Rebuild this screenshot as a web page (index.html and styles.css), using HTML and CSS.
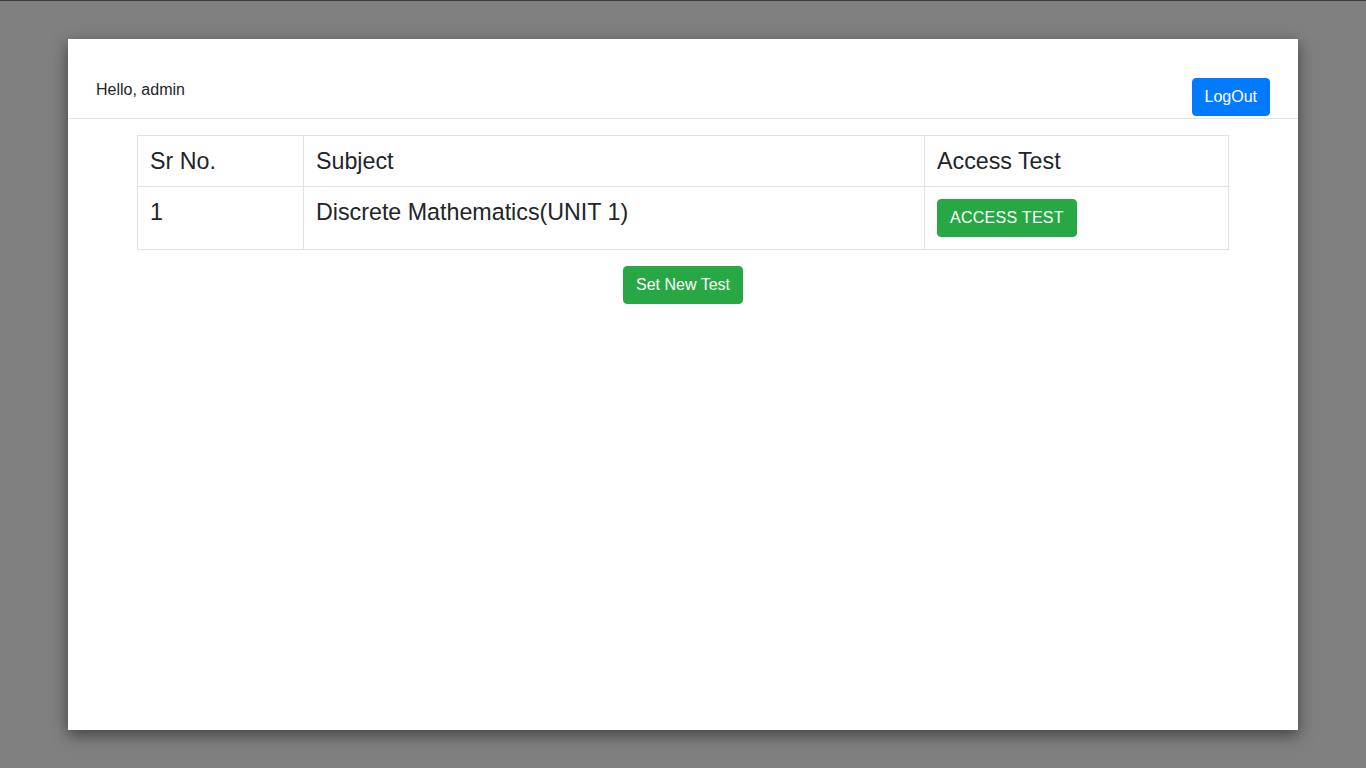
FILE: index.html
```html
<!DOCTYPE html>
<html lang="en">
<head>
<meta charset="utf-8">
<title>Tests</title>
<link rel="stylesheet" href="styles.css">
</head>
<body>
<div class="page">
  <div class="panel">
    <header class="topbar">
      <span class="hello">Hello, admin</span>
      <button class="btn btn-blue">LogOut</button>
    </header>
    <main class="content">
      <table class="tests">
        <thead>
          <tr>
            <th class="c-sr">Sr No.</th>
            <th class="c-subj">Subject</th>
            <th class="c-acc">Access Test</th>
          </tr>
        </thead>
        <tbody>
          <tr>
            <td>1</td>
            <td>Discrete Mathematics(UNIT 1)</td>
            <td><button class="btn btn-green btn-access">ACCESS TEST</button></td>
          </tr>
        </tbody>
      </table>
      <div class="actions">
        <button class="btn btn-green">Set New Test</button>
      </div>
    </main>
  </div>
</div>
</body>
</html>
```
FILE: styles.css
```css
* { box-sizing: border-box; }
html, body { margin: 0; padding: 0; }
body {
  background: #808080;
  font-family: "Liberation Sans", Arial, sans-serif;
  color: #212529;
  height: 768px;
  overflow: hidden;
  border-top: 1px solid #3a3a3a;
}
.page {
  padding: 38px 68px 0 68px;
}
.panel {
  background: #fff;
  height: 691px;
  box-shadow: 0 5px 15px rgba(0, 0, 0, 0.5);
}
.topbar {
  display: flex;
  justify-content: space-between;
  align-items: flex-start;
  padding: 39px 28px 2px 28px;
  border-bottom: 1px solid #e2e4e7;
}
.hello {
  font-size: 16px;
  line-height: 24px;
}
.btn {
  font-family: "Liberation Sans", Arial, sans-serif;
  font-size: 16px;
  line-height: 24px;
  padding: 6px 12px;
  border: 1px solid transparent;
  border-radius: 4px;
  color: #fff;
  cursor: pointer;
}
.btn-blue {
  background: #007bff;
  border-color: #007bff;
}
.btn-green {
  background: #28a745;
  border-color: #28a745;
}
.btn-access {
  letter-spacing: 0.27px;
}
.content {
  padding: 16px 69px 0 69px;
}
.tests {
  width: 100%;
  border-collapse: collapse;
  font-size: 23.25px;
  color: #212529;
}
.tests th, .tests td {
  border: 1px solid #dee2e6;
  padding: 12px;
  text-align: left;
  vertical-align: top;
  font-weight: normal;
  line-height: 26px;
}
.c-sr { width: 166px; }
.c-subj { width: 621px; }
.actions {
  display: flex;
  justify-content: center;
  padding-top: 16px;
}
```
